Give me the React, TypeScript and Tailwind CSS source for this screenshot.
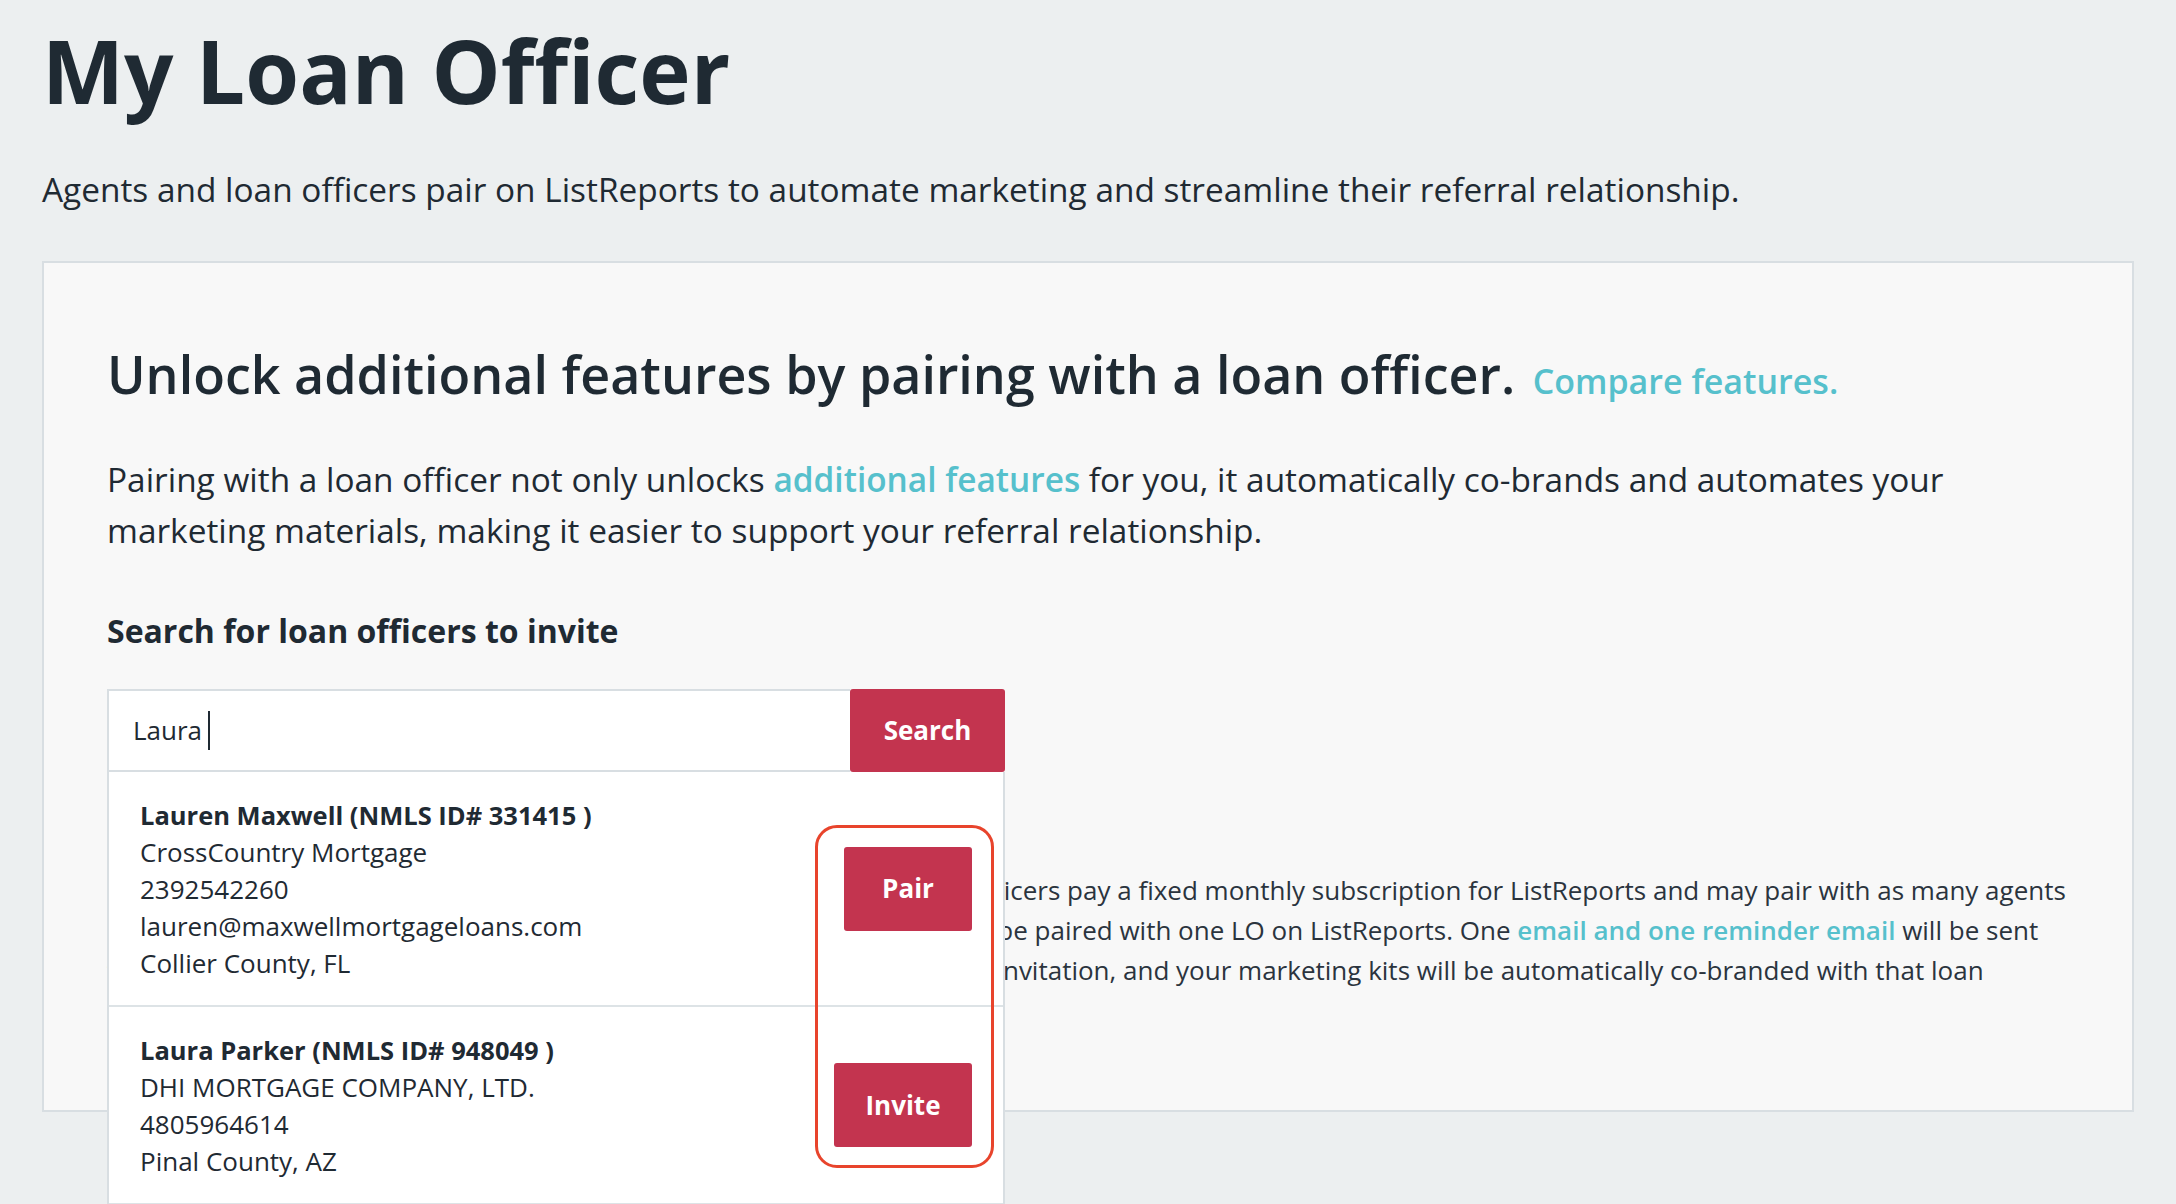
const officers = [
  {
    name: "Lauren Maxwell (NMLS ID# 331415 )",
    lines: ["CrossCountry Mortgage", "2392542260", "lauren@maxwellmortgageloans.com", "Collier County, FL"],
    action: "Pair",
    width: "w-[128px]",
  },
  {
    name: "Laura Parker (NMLS ID# 948049 )",
    lines: ["DHI MORTGAGE COMPANY, LTD.", "4805964614", "Pinal County, AZ"],
    action: "Invite",
    width: "w-[138px]",
  },
  {
    name: "Laura Jensen (NMLS ID# 402117 )",
    lines: ["Guild Mortgage", "6195550187", "San Diego County, CA"],
    action: "Invite",
    width: "w-[138px]",
  },
];

const App = () => {
  return (
    <div className="h-screen overflow-hidden bg-[#eceff0] px-[42px] pt-[27px] font-['Open_Sans',sans-serif] text-[#1f2a33]">
      <h1 className="text-[87px] font-bold leading-none">My Loan Officer</h1>
      <p className="mt-[55px] text-[33.4px] leading-[40px]">
        Agents and loan officers pair on ListReports to automate marketing and streamline their referral relationship.
      </p>

      <section className="mt-[52px] border-2 border-[#d8dee2] bg-[#f8f8f8] px-[63px] pt-[80px] pb-[80px]">
        <h2 className="text-[52px] font-semibold leading-[62px]">
          Unlock additional features by pairing with a loan officer.{" "}
          <a href="#" className="ml-1 text-[34px] font-semibold leading-none text-[#56c0cc]">
            Compare features.
          </a>
        </h2>

        <p className="mt-[49px] text-[33.4px] leading-[51px]">
          Pairing with a loan officer not only unlocks{" "}
          <a href="#" className="font-semibold text-[#56c0cc]">additional features</a> for you, it automatically
          co-brands and automates your marketing materials, making it easier to support your referral relationship.
        </p>

        <h3 className="mt-[57px] text-[32px] font-bold leading-[36px]">Search for loan officers to invite</h3>

        <div className="relative mt-[40px]">
          <div className="flex h-[83px] w-[898px]">
            <div className="flex flex-1 items-center border-2 border-r-0 border-[#d8dee2] bg-white pl-[24px] text-[26px]">
              <span>Laura</span>
              <span className="ml-[6px] h-[39px] w-[2px] bg-[#1f2a33]" />
            </div>
            <button
              type="button"
              className="w-[155px] rounded-[3px] bg-[#c3344f] text-[26px] font-bold text-white"
            >
              Search
            </button>
          </div>

          <div className="absolute left-0 top-full z-10 w-[898px] border-x-2 border-[#d8dee2] bg-white">
            {officers.map((o) => (
              <div
                key={o.name}
                className="flex items-center justify-between border-b-2 border-[#dde3e6] py-[23px] pl-[31px] pr-[31px]"
              >
                <div className="pt-[2px] text-[26px] leading-[37px]">
                  <div className="text-[25.5px] font-bold">{o.name}</div>
                  {o.lines.map((l) => (
                    <div key={l}>{l}</div>
                  ))}
                </div>
                <button
                  type="button"
                  className={`${o.width} h-[84px] rounded-[3px] bg-[#c3344f] text-[26px] font-bold text-white`}
                >
                  {o.action}
                </button>
              </div>
            ))}
          </div>

          <div className="pointer-events-none absolute left-[708px] top-[136px] z-20 h-[343px] w-[179px] rounded-[22px] border-[3px] border-[#e8442c]" />
        </div>

        <p className="mt-[98px] whitespace-nowrap text-[26px] leading-[40px] text-[#2b343e]">
          ListReports is free for agents who pair with their loan officers, and loan officers pay a fixed monthly
          subscription for ListReports and may pair with as many agents
          <br />
          as they'd like, but each agent can only have one at a time and so can only be paired with one LO on
          ListReports. One <a href="#" className="font-semibold text-[#56c0cc]">email and one reminder email</a> will be
          sent
          <br />
          to the loan officer you selected along with your personal note about your invitation, and your marketing
          kits will be automatically co-branded with that loan
          <br />
          officer once they accept the invitation.
        </p>
      </section>
    </div>
  );
};

export default App;
